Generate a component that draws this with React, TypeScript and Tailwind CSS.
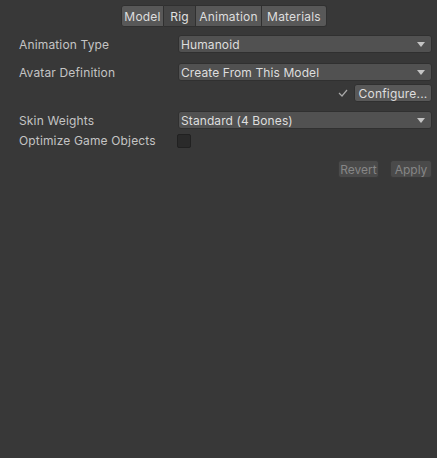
import React from 'react';

const tabs = [
  { name: 'Model', w: 'w-[43px]' },
  { name: 'Rig', w: 'w-[32px]' },
  { name: 'Animation', w: 'w-[66px]' },
  { name: 'Materials', w: 'w-[65px]' },
];

const Caret = () => (
  <svg width="8" height="5" viewBox="0 0 8 5" className="shrink-0">
    <path d="M0 0 H8 L4 5 Z" fill="#c4c4c4" />
  </svg>
);

const Dropdown = ({ value }: { value: string }) => (
  <div className="flex-1 h-[18px] flex items-center justify-between pl-[2px] pr-[6px] bg-[#515151] border border-[#303030] rounded-[3px] text-[#dedede]">
    <span className="leading-none pt-[1px] tracking-[0.1px]">{value}</span>
    <Caret />
  </div>
);

const Row = ({ label, children, className = '' }: { label: string; children: React.ReactNode; className?: string }) => (
  <div className={`flex items-center h-[18px] ${className}`}>
    <div className="w-[159px] shrink-0 pt-[2px] tracking-[0.15px]">{label}</div>
    {children}
  </div>
);

export default function App() {
  return (
    <div
      className="w-[437px] h-[458px] bg-[#383838] text-[12px] text-[#c4c4c4] overflow-hidden"
      style={{ fontFamily: 'Inter, "Noto Sans", sans-serif' }}
    >
      {/* Tabs */}
      <div className="flex pt-[5px] pl-[121px]">
        {tabs.map((t, i) => (
          <div
            key={t.name}
            className={`${t.w} h-[22px] flex items-center justify-center pt-[1px] tracking-[0.2px] border border-[#303030] ${i > 0 ? 'border-l-0' : 'rounded-l-[3px]'} ${i === tabs.length - 1 ? 'rounded-r-[3px]' : ''} ${t.name === 'Rig' ? 'bg-[#464646] text-[#e0e0e0]' : 'bg-[#585858] text-[#dedede]'}`}
          >
            {t.name}
          </div>
        ))}
      </div>

      <div className="pl-[19px] pr-[5px]">
        <Row label="Animation Type" className="mt-[8px]">
          <Dropdown value="Humanoid" />
        </Row>
        <Row label="Avatar Definition" className="mt-[10px]">
          <Dropdown value="Create From This Model" />
        </Row>
        <div className="flex items-center justify-end h-[18px] mt-[3px] gap-[6px]">
          <svg width="10" height="8" viewBox="0 0 10 8">
            <path d="M1 4 L4 7 L9 1" stroke="#a8a8a8" strokeWidth="1.2" fill="none" />
          </svg>
          <div className="w-[78px] h-[18px] flex items-center justify-center pt-[1px] tracking-[0.2px] bg-[#585858] border border-[#303030] rounded-[3px] text-[#dedede]">
            Configure...
          </div>
        </div>
        <Row label="Skin Weights" className="mt-[9px]">
          <Dropdown value="Standard (4 Bones)" />
        </Row>
        <Row label="Optimize Game Objects" className="mt-[2px]">
          <div className="w-[14px] h-[14px] bg-[#2a2a2a] border border-[#212121] rounded-[2px] -ml-[1px] mt-[2px]" />
        </Row>
        <div className="flex justify-end gap-[11px] mt-[11px]">
          <div className="w-[41px] h-[18px] flex items-center justify-center pt-[1px] bg-[#4a4a4a] border border-[#3a3a3a] rounded-[3px] text-[#868686]">
            Revert
          </div>
          <div className="w-[42px] h-[18px] flex items-center justify-center pt-[1px] bg-[#4a4a4a] border border-[#3a3a3a] rounded-[3px] text-[#868686]">
            Apply
          </div>
        </div>
      </div>
    </div>
  );
}
